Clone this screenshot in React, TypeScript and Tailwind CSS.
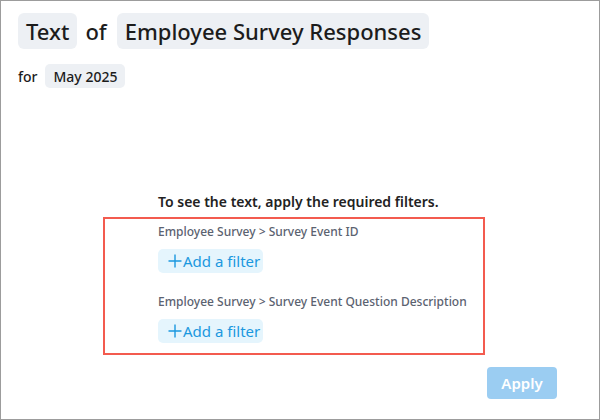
function PlusIcon() {
  return (
    <svg width="14" height="14" viewBox="0 0 14 14" className="shrink-0">
      <path d="M7 0.5V13.5M0.5 7H13.5" stroke="currentColor" strokeWidth="1.4" fill="none" />
    </svg>
  )
}

function AddFilter() {
  return (
    <button className="flex items-center h-6 w-[105px] rounded-[5px] bg-[#e5f5fd] pl-[10px] text-[15px] leading-none text-[#1b98df]">
      <PlusIcon />
      <span className="ml-[1px]">Add a filter</span>
    </button>
  )
}

const filters = [
  'Employee Survey > Survey Event ID',
  'Employee Survey > Survey Event Question Description',
]

export default function App() {
  return (
    <div className="w-[600px] h-[420px] box-border border border-[#9c9c9c] bg-white font-['Noto_Sans',sans-serif] text-[#1c1c1c]">
      <div className="pt-[12px] pl-[17px]">
        <div className="flex items-center h-9 gap-2 text-[22px] font-medium">
          <span className="h-9 flex items-center px-2 rounded-md bg-[#edf0f4]">Text</span>
          <span className="mr-0.5">of</span>
          <span className="h-9 flex items-center px-2 rounded-md bg-[#edf0f4]">Employee Survey Responses</span>
        </div>
        <div className="flex items-center mt-[15px] h-6 text-[14px] font-medium">
          <span>for</span>
          <span className="ml-[8px] h-6 flex items-center px-2 rounded-[5px] bg-[#edf0f4]">May 2025</span>
        </div>
      </div>

      <div className="mt-[104px] pl-[157px] text-[14px] leading-5 font-semibold text-[#222]">
        To see the text, apply the required filters.
      </div>

      <div className="mt-[5px] ml-[102px] w-[382px] box-border border-2 border-[#f35b4f] pl-[53px] pt-[4px] pb-[10px]">
        {filters.map((label, i) => (
          <div key={label} className={i > 0 ? 'mt-[20px]' : ''}>
            <div className="text-[12px] leading-[18px] font-medium text-[#5b6270]">{label}</div>
            <div className="mt-[8px]">
              <AddFilter />
            </div>
          </div>
        ))}
      </div>

      <div className="flex justify-end pr-[42px] mt-[12px]">
        <button className="h-8 w-[70px] rounded-[4px] bg-[#9bcdf2] text-white text-[15px] font-semibold">
          Apply
        </button>
      </div>
    </div>
  )
}
